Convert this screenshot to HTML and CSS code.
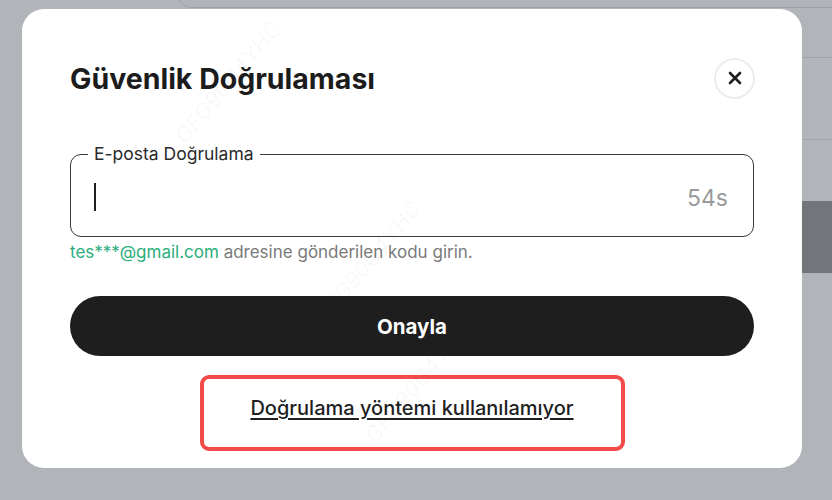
FILE: index.html
```html
<!DOCTYPE html>
<html lang="tr">
<head>
<meta charset="utf-8">
<link rel="stylesheet" href="styles.css">
</head>
<body>
<div class="backdrop">
  <div class="bg-card"></div>
  <div class="bg-side">
    <div class="side-row r1"></div>
    <div class="side-row r2"></div>
    <div class="side-row r3"></div>
    <div class="side-row dark"></div>
    <div class="side-row r4"></div>
  </div>
  <div class="modal">
    <div class="modal-head">
      <h1 class="title">Güvenlik Doğrulaması</h1>
      <button class="close" aria-label="Kapat">
        <svg width="14" height="14" viewBox="0 0 14 14"><path d="M2 2 L12 12 M12 2 L2 12" stroke="#1f1f1f" stroke-width="2.6" stroke-linecap="round"/></svg>
      </button>
    </div>
    <fieldset class="field">
      <legend class="legend">E-posta Doğrulama</legend>
      <div class="field-inner">
        <span class="caret"></span>
        <span class="timer">54s</span>
      </div>
    </fieldset>
    <p class="hint"><span class="mail">tes***@gmail.com</span> adresine gönderilen kodu girin.</p>
    <button class="confirm">Onayla</button>
    <div class="alt-wrap">
      <div class="alt-box"><a class="alt-link">Doğrulama yöntemi kullanılamıyor</a></div>
    </div>
    <span class="wm wm1">GFG90G4YHC</span>
    <span class="wm wm2">GFG90G4YHC</span>
    <span class="wm wm3">GFG90G4YHC</span>
  </div>
</div>
</body>
</html>
```
FILE: styles.css
```css
* { box-sizing: border-box; }
html, body { margin: 0; padding: 0; }
body {
  width: 832px;
  height: 500px;
  overflow: hidden;
  background: #b1b4b9;
  font-family: Inter, "Liberation Sans", sans-serif;
  color: #1f1f1f;
}
.backdrop {
  position: relative;
  width: 832px;
  height: 500px;
  overflow: hidden;
}
.bg-card {
  position: absolute;
  left: 176px;
  top: -40px;
  width: 700px;
  height: 48px;
  border: 1px solid #9fa2a7;
  border-radius: 0 0 0 16px;
}
.bg-side {
  position: absolute;
  left: 802px;
  top: 0;
  width: 30px;
  display: flex;
  flex-direction: column;
}
.side-row { border-bottom: 1px solid #a0a3a8; }
.r1 { height: 58px; }
.r2 { height: 82px; }
.r3 { height: 61px; border-bottom: none; }
.dark { height: 72px; background: #727579; border: none; }
.r4 { height: 28px; border: none; }

.modal {
  position: absolute;
  left: 22px;
  top: 9px;
  width: 780px;
  height: 459px;
  background: #fff;
  border-radius: 22px;
  padding: 47px 48px 0 48px;
  overflow: hidden;
}
.modal-head {
  display: flex;
  align-items: center;
  justify-content: space-between;
  height: 44px;
}
.title {
  margin: 0;
  font-size: 28.5px;
  font-weight: 700;
  letter-spacing: 0;
  color: #1c1c1c;
}
.close {
  width: 41px;
  height: 41px;
  border-radius: 50%;
  border: 2px solid #ececec;
  background: #fff;
  display: flex;
  align-items: center;
  justify-content: center;
  padding: 0;
  margin-right: -1px;
}
.field {
  margin: 45px 0 0 0;
  padding: 0 24px 0 23px;
  border: 1px solid #3a3a3a;
  border-radius: 11px;
  height: 92px;
  min-width: 0;
}
.legend {
  padding: 0 6px;
  margin-left: -6px;
  font-size: 17.5px;
  color: #2a2a2a;
  letter-spacing: 0;
  line-height: 18px;
}
.field-inner {
  display: flex;
  align-items: center;
  justify-content: space-between;
  height: 72px;
  margin-top: -1px;
}
.caret {
  width: 2px;
  height: 28px;
  background: #1f1f1f;
  margin-top: -2px;
}
.timer {
  font-size: 23px;
  color: #9a9a9a;
  letter-spacing: 0;
  margin-right: 1px;
}
.hint {
  margin: 5px 0 0 0;
  font-size: 17px;
  color: #7a7a7a;
  letter-spacing: 0;
  line-height: 20px;
}
.mail { color: #2aae7c; }
.confirm {
  display: block;
  width: 100%;
  height: 60px;
  margin-top: 34px;
  border: none;
  border-radius: 30px;
  background: #1e1e1e;
  color: #fff;
  font-family: inherit;
  font-size: 20.5px;
  font-weight: 700;
  letter-spacing: 0;
}
.alt-wrap {
  display: flex;
  justify-content: center;
  margin-top: 19px;
}
.alt-box {
  width: 425px;
  height: 76px;
  border: 4px solid #f24c4a;
  border-radius: 9px;
  display: flex;
  justify-content: center;
  padding-top: 17px;
}
.alt-link {
  font-size: 20px;
  font-weight: 500;
  color: #1f1f1f;
  text-decoration: underline;
  text-underline-offset: 3px;
  letter-spacing: 0;
  line-height: 24px;
}
.wm {
  position: absolute;
  font-size: 22px;
  color: rgba(0,0,0,0.035);
  transform: rotate(-50deg);
  white-space: nowrap;
  font-style: italic;
}
.wm1 { left: 130px; top: 60px; }
.wm2 { left: 270px; top: 240px; }
.wm3 { left: 320px; top: 360px; }
```
